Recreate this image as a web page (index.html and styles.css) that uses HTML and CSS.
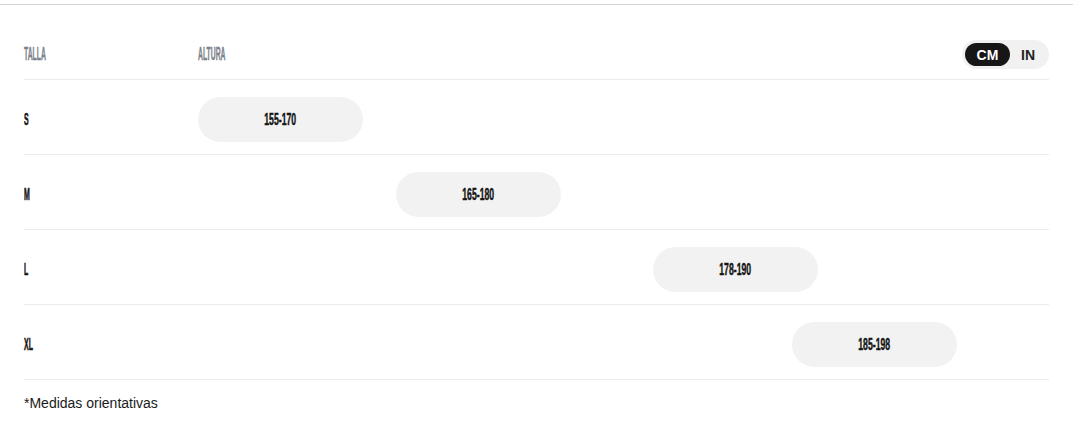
FILE: index.html
```html
<!DOCTYPE html>
<html lang="es">
<head>
<meta charset="utf-8">
<title>Guía de tallas</title>
<link rel="stylesheet" href="styles.css">
</head>
<body>
<div class="topline"></div>
<section class="sizes">
  <div class="head">
    <div class="col-size"><span class="cond head-label">TALLA</span></div>
    <div class="col-track"><span class="cond head-label">ALTURA</span></div>
    <div class="unit-toggle">
      <button class="unit active">CM</button>
      <button class="unit">IN</button>
    </div>
  </div>
  <div class="row">
    <div class="col-size"><span class="cond size-label">S</span></div>
    <div class="col-track track"><div class="bar" style="margin-left:0%"><span class="cond num">155-170</span></div></div>
  </div>
  <div class="row">
    <div class="col-size"><span class="cond size-label">M</span></div>
    <div class="col-track track"><div class="bar" style="margin-left:23.256%"><span class="cond num">165-180</span></div></div>
  </div>
  <div class="row">
    <div class="col-size"><span class="cond size-label">L</span></div>
    <div class="col-track track"><div class="bar" style="margin-left:53.488%"><span class="cond num">178-190</span></div></div>
  </div>
  <div class="row">
    <div class="col-size"><span class="cond size-label">XL</span></div>
    <div class="col-track track"><div class="bar" style="margin-left:69.767%"><span class="cond num">185-198</span></div></div>
  </div>
  <p class="note">*Medidas orientativas</p>
</section>
</body>
</html>
```
FILE: styles.css
```css
html, body {
  margin: 0;
  padding: 0;
  background: #ffffff;
  font-family: "Liberation Sans", Arial, sans-serif;
  color: #141414;
}

.topline {
  margin-top: 4px;
  height: 1px;
  background: #d6d6d6;
}

.sizes {
  padding: 35px 24px 0;
}

.head {
  display: flex;
  align-items: center;
  height: 29px;
  padding-bottom: 10px;
  border-bottom: 1px solid #ebebeb;
}

.col-size {
  width: 174px;
  flex: none;
  display: flex;
  align-items: center;
}

.col-track {
  flex: 1;
  display: flex;
  align-items: center;
}

.cond {
  display: inline-block;
  font-weight: 700;
  line-height: 1;
  white-space: nowrap;
}

.head-label {
  font-size: 17.5px;
  color: #7c828b;
  transform: scaleX(0.39);
  transform-origin: left center;
  -webkit-text-stroke: 0.4px #7c828b;
}

.size-label {
  font-size: 17px;
  color: #141414;
  transform: scaleX(0.41);
  transform-origin: left center;
  -webkit-text-stroke: 0.6px #141414;
}

.unit-toggle {
  display: flex;
  padding: 3px;
  background: #f1f1f1;
  border-radius: 15px;
}

.unit {
  border: 0;
  margin: 0;
  padding: 0;
  height: 23px;
  font-family: "Liberation Sans", Arial, sans-serif;
  font-weight: 700;
  font-size: 14px;
  background: transparent;
  color: #222222;
  width: 36px;
  border-radius: 12px;
}

.unit.active {
  width: 45px;
  background: #161616;
  color: #ffffff;
}

.row {
  display: flex;
  align-items: center;
  padding: 17px 0 12px;
  border-bottom: 1px solid #ebebeb;
}

.track {
  display: flex;
}

.bar {
  flex: none;
  width: 165px;
  height: 45px;
  border-radius: 23px;
  background: #f2f2f2;
  display: flex;
  align-items: center;
  justify-content: center;
}

.num {
  font-size: 17px;
  color: #141414;
  transform: scaleX(0.51);
  transform-origin: center center;
  -webkit-text-stroke: 0.5px #141414;
}

.note {
  margin: 15px 0 0;
  font-size: 14px;
  line-height: 16px;
  color: #1a1a1a;
}
```
